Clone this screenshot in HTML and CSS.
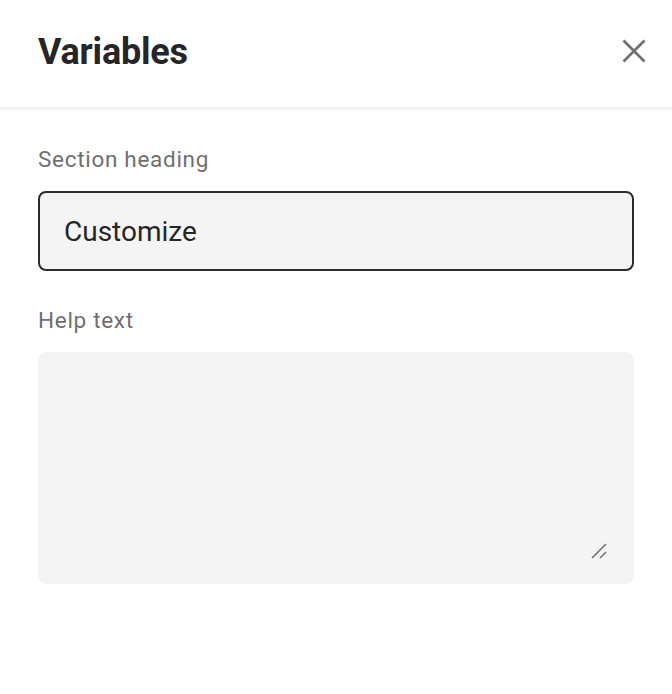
FILE: index.html
```html
<!DOCTYPE html>
<html>
<head>
<meta charset="utf-8">
<link rel="stylesheet" href="styles.css">
</head>
<body>
<div class="panel">
  <header class="header">
    <h1 class="title">Variables</h1>
    <button class="close" aria-label="Close">
      <svg width="24" height="24" viewBox="0 0 24 24"><path d="M1.5 1.5 L22.5 22.5 M22.5 1.5 L1.5 22.5" stroke="#6f6f6f" stroke-width="2.7" fill="none"/></svg>
    </button>
  </header>
  <div class="body">
    <div class="field">
      <label class="label">Section heading</label>
      <div class="input">Customize</div>
    </div>
    <div class="field">
      <label class="label">Help text</label>
      <div class="textarea">
        <svg class="grip" width="16" height="16" viewBox="0 0 16 16"><path d="M1 15 L15 1 M9 15 L15 9" stroke="#6f6f6f" stroke-width="1.5" fill="none"/></svg>
      </div>
    </div>
  </div>
</div>
</body>
</html>
```
FILE: styles.css
```css
html, body { margin: 0; padding: 0; background: #fff; }
body { font-family: Roboto, "Noto Sans", sans-serif; color: #262626; }
.panel { width: 672px; }
.header {
  height: 107px;
  border-bottom: 3px solid #f2f2f2;
  display: flex;
  align-items: flex-start;
  justify-content: space-between;
  padding: 0 26px 0 38px;
  box-sizing: content-box;
}
.title { margin: 30px 0 0; font-size: 36px; font-weight: 700; line-height: 44px; color: #262626; letter-spacing: -0.2px; }
.close { margin-top: 39px; background: none; border: 0; padding: 0; width: 24px; height: 24px; display: block; }
.close svg { display: block; }
.body { padding: 35px 38px 0; display: flex; flex-direction: column; gap: 35px; }
.field { display: flex; flex-direction: column; gap: 18px; }
.label { font-size: 22.5px; color: #6f6f6f; line-height: 28px; letter-spacing: 0.7px; }
.input {
  height: 80px; box-sizing: border-box;
  border: 2px solid #2b2b2b; border-radius: 8px; background: #f4f4f4;
  display: flex; align-items: center; padding: 0 24px;
  font-size: 28px; color: #262626;
}
.textarea {
  height: 232px; border-radius: 8px; background: #f4f4f4; position: relative;
}
.grip { position: absolute; right: 27px; bottom: 25px; }
```
